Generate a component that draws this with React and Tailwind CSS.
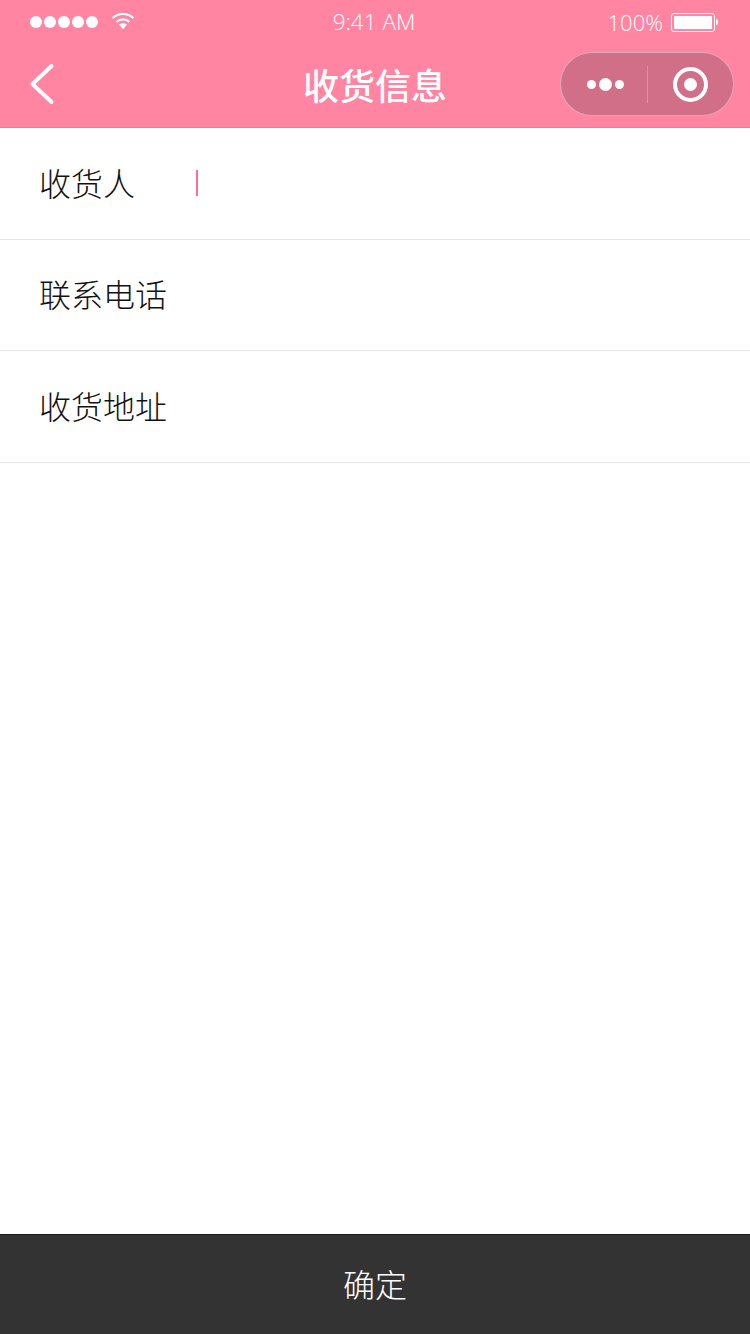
function Row({ label, caret }) {
  return (
    <div className="flex h-[111.5px] items-center border-b border-[#e5e5e5] pl-[39px]">
      <span className="-mt-[3px] w-[157px] text-[32px] font-light leading-[44px] text-[#111111]">{label}</span>
      {caret && <span className="h-[26px] w-[2px] bg-[#ff6e96]" />}
    </div>
  );
}

export default function App() {
  return (
    <div
      className="flex h-[1334px] w-[750px] flex-col bg-white"
      style={{ fontFamily: '"Noto Sans CJK SC", "Open Sans", sans-serif' }}
    >
      <header className="h-[128px] border-b border-[#e87d9b] bg-[#ff85a2] text-white">
        <div className="flex h-[44px] items-center justify-between pl-[30px] pr-[32px]">
          <div className="flex w-[200px] items-center gap-[13px]">
            <div className="flex gap-[2px]">
              {[0, 1, 2, 3, 4].map((i) => (
                <span key={i} className="h-[12px] w-[12px] rounded-full bg-white" />
              ))}
            </div>
            <svg width="24" height="18" viewBox="0 0 24 18" fill="none" className="-mt-[3px]">
              <path d="M1.5 6.2C7.5 .6 16.5 .6 22.5 6.2" stroke="#fff" strokeWidth="2.2" />
              <path d="M5.5 10C9.2 6.6 14.8 6.6 18.5 10" stroke="#fff" strokeWidth="2.2" />
              <path d="M8 12.6c2.4-1.7 5.6-1.7 8 0l-4 4.6z" fill="#fff" />
            </svg>
          </div>
          <span className="font-['Open_Sans'] text-[22.5px] font-light leading-none">9:41 AM</span>
          <div className="flex w-[200px] items-center justify-end gap-[8px]">
            <span className="font-['Open_Sans'] text-[22px] font-light leading-none">100%</span>
            <div className="flex items-center">
              <div className="h-[19px] w-[44px] rounded-[3px] border border-white p-[2px]">
                <div className="h-full w-full rounded-[1px] bg-white" />
              </div>
              <span className="ml-[1px] h-[6px] w-[2px] rounded-r-full bg-white" />
            </div>
          </div>
        </div>
        <div className="relative flex h-[83px] items-center justify-center">
          <svg width="26" height="42" viewBox="0 0 26 42" fill="none" className="absolute left-[29px] top-[19px]">
            <path d="M22.5 3 3.5 21l19 18" stroke="#fff" strokeWidth="4" strokeLinecap="round" strokeLinejoin="round" />
          </svg>
          <h1 className="-mt-[4px] text-[36px] font-medium leading-none">收货信息</h1>
          <div className="absolute right-[16px] top-[8px] flex h-[64px] w-[174px] items-center rounded-full border border-[#ffffff66] bg-[#d16e88]">
            <div className="flex w-[86px] items-center justify-center gap-[3px] pl-[3px]">
              <span className="h-[9px] w-[9px] rounded-full bg-white" />
              <span className="h-[13px] w-[13px] rounded-full bg-white" />
              <span className="h-[9px] w-[9px] rounded-full bg-white" />
            </div>
            <span className="h-[37px] w-px bg-[#ffffff40]" />
            <div className="flex flex-1 items-center justify-center">
              <span className="flex h-[35px] w-[35px] items-center justify-center rounded-full border-[4px] border-white">
                <span className="h-[13px] w-[13px] rounded-full bg-white" />
              </span>
            </div>
          </div>
        </div>
      </header>
      <main className="flex-1">
        <Row label="收货人" caret />
        <Row label="联系电话" />
        <Row label="收货地址" />
      </main>
      <button className="h-[100px] w-full border-t border-[#1a1a1a] bg-[#333333] pb-[3px] text-[32px] font-light text-white">确定</button>
    </div>
  );
}
